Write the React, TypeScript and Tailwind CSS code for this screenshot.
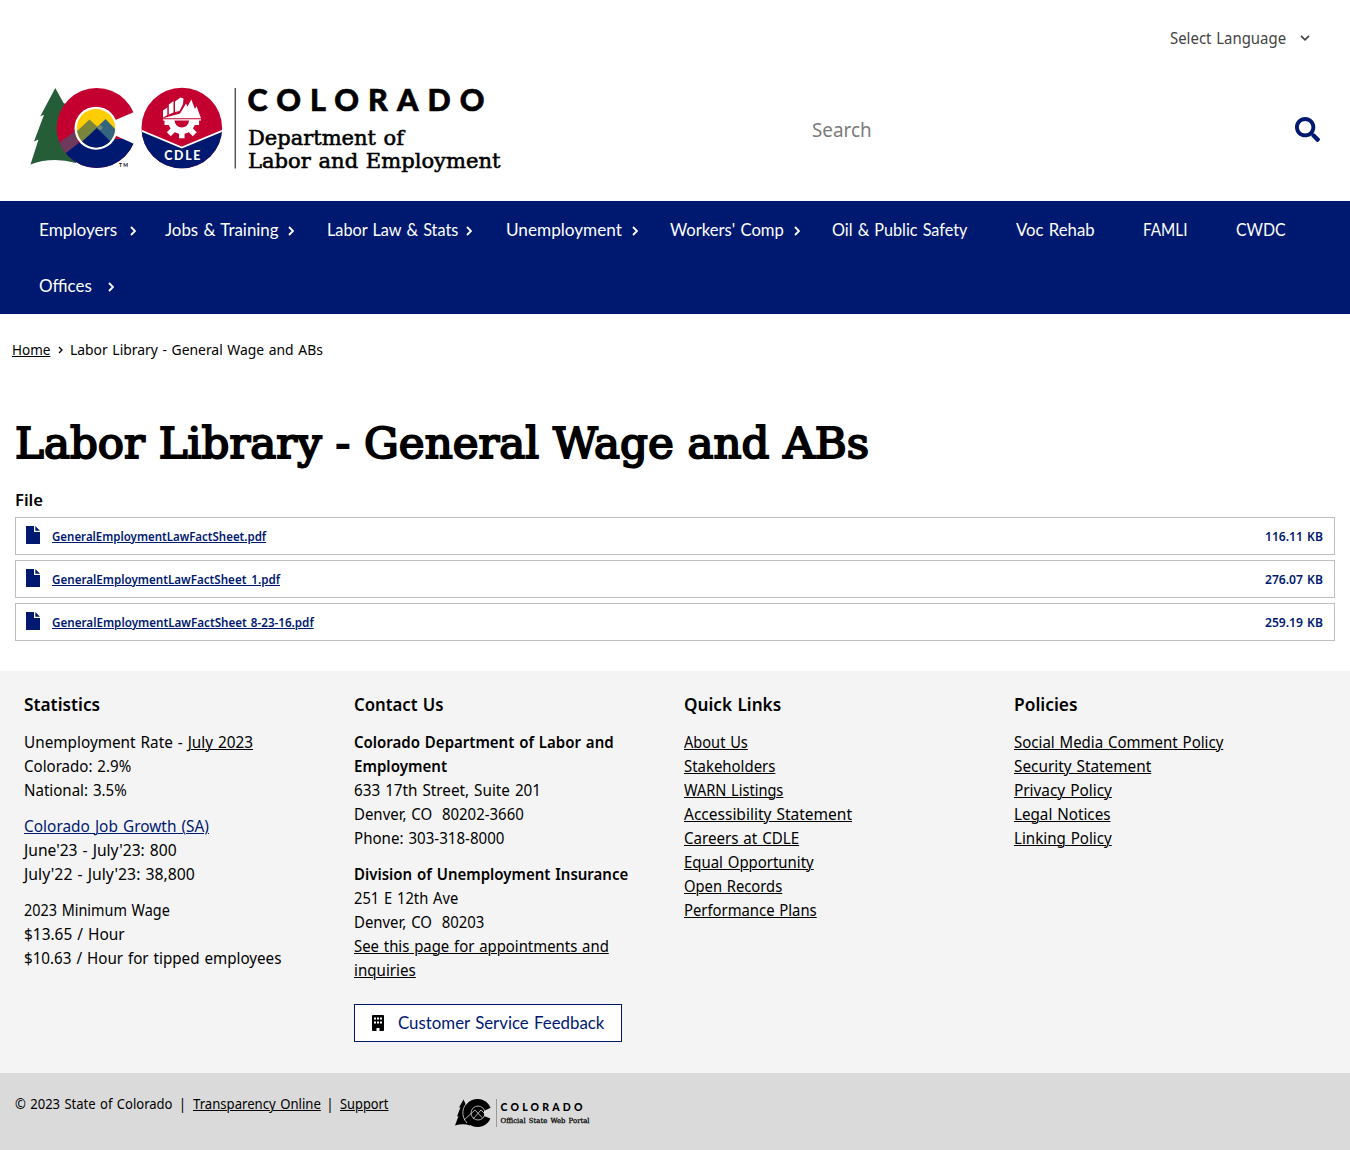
import { useLayoutEffect, useRef, useState } from 'react';
import type { ReactNode } from 'react';

/** Inline text that is condensed or widened to occupy exactly `w` pixels. */
function Fit({ w, children, className = '' }: { w: number; children: ReactNode; className?: string }) {
  const ref = useRef<HTMLSpanElement>(null);
  const [scale, setScale] = useState(1);
  useLayoutEffect(() => {
    if (ref.current) setScale(w / ref.current.offsetWidth);
  }, [w]);
  return (
    <span className="inline-block whitespace-nowrap" style={{ width: w }}>
      <span ref={ref} className={`inline-block origin-left ${className}`} style={{ transform: `scaleX(${scale})` }}>
        {children}
      </span>
    </span>
  );
}

const link = 'underline decoration-1 underline-offset-1';

function Chevron({ className = '' }: { className?: string }) {
  return (
    <svg className={`mt-px shrink-0 ${className}`} width="6" height="10" viewBox="0 0 6 10" fill="none" stroke="currentColor" strokeWidth="1.8">
      <path d="M1 1l4 4-4 4" />
    </svg>
  );
}

function Logo() {
  return (
    <svg width="476" height="94" viewBox="28 84 476 94" role="img" aria-label="Colorado Department of Labor and Employment">
      <defs>
        <clipPath id="c-outer"><circle cx="96.7" cy="128" r="40" /></clipPath>
        <clipPath id="c-inner"><circle cx="96" cy="128.2" r="19.2" /></clipPath>
        <clipPath id="badge"><circle cx="181.8" cy="128" r="40.3" /></clipPath>
        <clipPath id="below-brim"><rect x="160" y="120" width="44" height="22" /></clipPath>
      </defs>
      <path fill="#245d38" d="M55.300 88L40.300 116.300 44 114.800 34 141.500 38.500 139.500 30.500 164.500Q52 156.500 76 163L80 110 63.500 103z" />
      <g clipPath="url(#c-outer)">
        <rect x="56" y="87" width="82" height="82" fill="#c3002f" />
        <path fill="#6d3a5d" d="M56 145L78 129V146L64 156H56z" />
        <path fill="#001970" d="M62 156L84 139H140V170H70z" />
      </g>
      <path fill="#fff" d="M112 121.500L141 109V147L112 134z" />
      <circle cx="96" cy="128.200" r="21.500" fill="#fff" />
      <g clipPath="url(#c-inner)">
        <rect x="75" y="107" width="42" height="42" fill="#ffcd00" />
        <path fill="#7a853b" d="M75 133L89.500 119.500 104 133V149H75z" />
        <path fill="#35647e" d="M92 132L105.500 119 119 133V149H92z" />
        <path fill="#6c8975" d="M97.500 127L100 124.500 103 128 97.500 132z" />
        <path fill="#001970" d="M75 148L97 128 117 148V150H75z" />
      </g>
      <text x="119" y="167" fontSize="5" fontWeight="700" fontFamily="Lato, sans-serif" textLength="9">TM</text>
      <g clipPath="url(#badge)">
        <rect x="141" y="87" width="82" height="82" fill="#c3002f" />
        <path fill="#001970" d="M140 129.500L181.800 147 224 129.500V170H140z" />
        <path fill="none" stroke="#fff" strokeWidth="1.800" d="M140 130L181.800 147.600 224 130" />
      </g>
      <g fill="#fff">
        <path d="M163 117.500V110.500L167.300 107.500V115L163.500 117.500z" />
        <path d="M168.800 114.500V104.500L173.500 101V112.500z" />
        <path d="M175 112V101.500L180.500 97.500 183.500 98.500 183 104 179.500 111z" />
        <path d="M163 118.300L180 113.500 186 103.500 187.500 106.500 191.300 99.500 195 109 196.500 106 201 118.300z" />
        <path d="M163 119.300H201V120.500H163z" />
      </g>
      <g clipPath="url(#below-brim)" stroke="#fff">
        <circle cx="181.800" cy="120.300" r="10.500" fill="none" strokeWidth="6.500" />
        <path fill="none" strokeWidth="5.500" d="M181.800 132V138.300M174 129L168.800 134.300M189.600 129L194.800 134.300M170 122.300H164.500M193.600 122.300H199.100" />
      </g>
      <text x="164.300" y="160" fill="#fff" fontSize="12.300" fontWeight="900" fontFamily="Lato, sans-serif" textLength="36">CDLE</text>
      <path stroke="#54565a" strokeWidth="1.500" d="M235.300 88V168.500" />
      <text x="247.500" y="110.700" fontSize="30.500" fontWeight="900" fontFamily="Lato, sans-serif" stroke="#000" strokeWidth="0.600" textLength="237">COLORADO</text>
      <g fontFamily="'DejaVu Serif', serif" fontSize="20.500" stroke="#000" strokeWidth="0.550">
        <text x="248" y="145" textLength="156" lengthAdjust="spacingAndGlyphs">Department of</text>
        <text x="248" y="167.700" textLength="252.500" lengthAdjust="spacingAndGlyphs">Labor and Employment</text>
      </g>
    </svg>
  );
}

function PortalLogo() {
  return (
    <svg width="140" height="30" viewBox="455 1098 140 30" role="img" aria-label="Colorado Official State Web Portal">
      <path d="M463.500 1099.500L459 1107.500 460.500 1107.300 457 1116.500 458.500 1116 455 1125.500Q463 1123 470 1125.500L471 1104 466 1105z" />
      <circle cx="477.500" cy="1113" r="14" />
      <path fill="#dadada" d="M484 1111L493 1106.500V1119.500L484 1116z" />
      <g fill="none" stroke="#dadada" strokeWidth="0.800">
        <path d="M469 1101A14.500 14.500 0 0 0 467 1123" />
        <circle cx="478" cy="1113" r="7" />
        <path d="M464 1120L475 1110 482 1117.500M473 1119L481 1110 485 1114" />
      </g>
      <path stroke="#888" strokeWidth="0.800" d="M496.500 1099V1127" />
      <text x="500.500" y="1110.700" fontSize="10.500" fontWeight="900" fontFamily="Lato, sans-serif" textLength="82">COLORADO</text>
      <text x="500.500" y="1122.700" fontSize="6.900" fontFamily="'DejaVu Serif', serif" stroke="#000" strokeWidth="0.250" textLength="89" lengthAdjust="spacingAndGlyphs">Official State Web Portal</text>
    </svg>
  );
}

function Nav() {
  return (
    <nav className="h-[113px] bg-[#001970] pt-px pl-[39px] font-[Lato,sans-serif] text-[16.5px] text-white">
      <div className="flex h-14 items-center">
        <a className="flex w-[126px] items-center gap-[13px]"><Fit w={78}>Employers</Fit><Chevron /></a>
        <a className="flex w-[162px] items-center gap-[9.500px]"><Fit w={113.5}>Jobs &amp; Training</Fit><Chevron /></a>
        <a className="flex w-[179px] items-center gap-2"><Fit w={131}>Labor Law &amp; Stats</Fit><Chevron /></a>
        <a className="flex w-[164px] items-center gap-2.5"><Fit w={115.5}>Unemployment</Fit><Chevron /></a>
        <a className="flex w-[162px] items-center gap-2.5"><Fit w={114}>Workers&apos; Comp</Fit><Chevron /></a>
        <a className="w-[184px]"><Fit w={135.5}>Oil &amp; Public Safety</Fit></a>
        <a className="w-[127px]"><Fit w={79}>Voc Rehab</Fit></a>
        <a className="w-[93px]"><Fit w={44.5}>FAMLI</Fit></a>
        <a><Fit w={50}>CWDC</Fit></a>
      </div>
      <div className="flex h-14 items-center">
        <a className="flex items-center gap-4"><Fit w={52.5}>Offices</Fit><Chevron /></a>
      </div>
    </nav>
  );
}

const files = [
  { name: 'GeneralEmploymentLawFactSheet.pdf', w: 214.5, size: '116.11 KB' },
  { name: 'GeneralEmploymentLawFactSheet_1.pdf', w: 228.5, size: '276.07 KB' },
  { name: 'GeneralEmploymentLawFactSheet 8-23-16.pdf', w: 262, size: '259.19 KB' },
];

const quickLinks: [string, number][] = [
  ['About Us', 64], ['Stakeholders', 91.5], ['WARN Listings', 99.5], ['Accessibility Statement', 168],
  ['Careers at CDLE', 115], ['Equal Opportunity', 130], ['Open Records', 98], ['Performance Plans', 133],
];

const policies: [string, number][] = [
  ['Social Media Comment Policy', 209], ['Security Statement', 137.5], ['Privacy Policy', 98], ['Legal Notices', 96], ['Linking Policy', 97.5],
];

function Column({ title, w, children }: { title: string; w: number; children: ReactNode }) {
  return (
    <section className="w-[330px]">
      <h2 className="mb-3.5 h-6 text-[17.500px] font-semibold"><Fit w={w}>{title}</Fit></h2>
      {children}
    </section>
  );
}

function Line({ w, children, className }: { w: number; children: ReactNode; className?: string }) {
  return <div className="h-6"><Fit w={w} className={className}>{children}</Fit></div>;
}

export default function App() {
  return (
    <div className="h-[1150px] w-[1350px] overflow-hidden bg-white font-['Noto_Sans',sans-serif] text-[15.500px] leading-6 text-black [word-spacing:1px]">
      <header className="h-[201px] pt-[26px]">
        <div className="flex h-6 items-center justify-end gap-3.5 pr-10 text-[#444]">
          <Fit w={116.5}>Select Language</Fit>
          <svg width="10" height="6" viewBox="0 0 10 6" fill="none" stroke="#444" strokeWidth="1.700"><path d="M1 .8l4 4 4-4" /></svg>
        </div>
        <div className="flex pt-[34px] pl-7">
          <Logo />
          <div className="-mt-[3px] ml-[308px] flex w-[508px] items-center justify-between">
            <span className="text-[19px] text-[#7b7b7b]"><Fit w={59.5}>Search</Fit></span>
            <svg width="25" height="25" viewBox="0 0 512 512" fill="#001970">
              <path d="M505 442.700L405.300 343c-4.500-4.500-10.600-7-17-7H372c27.600-35.300 44-79.700 44-128C416 93.100 322.900 0 208 0S0 93.100 0 208s93.100 208 208 208c48.300 0 92.700-16.400 128-44v16.300c0 6.400 2.500 12.500 7 17l99.700 99.700c9.400 9.400 24.600 9.400 33.900 0l28.300-28.300c9.400-9.400 9.400-24.600.1-34zM208 336c-70.700 0-128-57.200-128-128 0-70.700 57.200-128 128-128 70.700 0 128 57.200 128 128 0 70.700-57.200 128-128 128z" />
            </svg>
          </div>
        </div>
      </header>
      <Nav />
      <main className="h-[357px] px-[15px] pt-6">
        <div className="-ml-[3px] flex h-6 items-center text-[14px]">
          <Fit w={38.5} className={link}>Home</Fit>
          <svg className="mr-[7px] ml-[7px]" width="5" height="8" viewBox="0 0 5 8" fill="none" stroke="#000" strokeWidth="1.300"><path d="M1 1l3 3-3 3" /></svg>
          <Fit w={253}>Labor Library - General Wage and ABs</Fit>
        </div>
        <h1 className="mt-[51px] h-[60px] font-['DejaVu_Serif',serif] text-[43px] leading-[60px] [-webkit-text-stroke:2px_black] [word-spacing:0px]">
          <Fit w={854}>Labor Library - General Wage and ABs</Fit>
        </h1>
        <div className="mt-[15px] h-[29px] text-[16px] font-semibold"><Fit w={28}>File</Fit></div>
        <ul className="flex flex-col gap-[5px] text-[12px] font-semibold text-[#001970]">
          {files.map((f) => (
            <li key={f.name} className="flex h-[38px] items-center border border-[#bfbfbf] pt-0.5 pr-3 pl-2.5">
              <svg className="mr-3 -mt-1" width="14" height="18" viewBox="0 0 14 18" fill="#001970"><path d="M0 0h8v6h6v12H0z" /><path d="M9.300 0L14 4.700H9.300z" /></svg>
              <Fit w={f.w} className={link}>{f.name}</Fit>
              <span className="ml-auto"><Fit w={57.5}>{f.size}</Fit></span>
            </li>
          ))}
        </ul>
      </main>
      <footer>
        <div className="flex h-[402px] bg-[#f4f4f4] pt-[21px] pl-6">
          <Column title="Statistics" w={76}>
            <Line w={229}>Unemployment Rate - <a className={link}>July 2023</a></Line>
            <Line w={107}>Colorado: 2.9%</Line>
            <Line w={103}>National: 3.5%</Line>
            <div className="h-3" />
            <Line w={185} className={`text-[#001970] ${link}`}>Colorado Job Growth (SA)</Line>
            <Line w={153}>June&apos;23 - July&apos;23: 800</Line>
            <Line w={171}>July&apos;22 - July&apos;23: 38,800</Line>
            <div className="h-3" />
            <Line w={146}>2023 Minimum Wage</Line>
            <Line w={100.5}>$13.65 / Hour</Line>
            <Line w={257.5}>$10.63 / Hour for tipped employees</Line>
          </Column>
          <Column title="Contact Us" w={90}>
            <Line w={259.5} className="font-semibold">Colorado Department of Labor and</Line>
            <Line w={93.5} className="font-semibold">Employment</Line>
            <Line w={187}>633 17th Street, Suite 201</Line>
            <Line w={170}>Denver, CO&nbsp; 80202-3660</Line>
            <Line w={150}>Phone: 303-318-8000</Line>
            <div className="h-3" />
            <Line w={274} className="font-semibold">Division of Unemployment Insurance</Line>
            <Line w={104.5}>251 E 12th Ave</Line>
            <Line w={130}>Denver, CO&nbsp; 80203</Line>
            <Line w={254.5} className={link}>See this page for appointments and</Line>
            <Line w={61.5} className={link}>inquiries</Line>
            <a className="mt-[22px] flex h-[38px] w-[268px] items-center border border-[#001970] bg-white pl-[17px] font-[Lato,sans-serif] text-[16.500px] text-[#001970]">
              <svg className="mr-3.5" width="12" height="16" viewBox="0 0 12 16" fill="#000" fillRule="evenodd">
                <path d="M1 0h10q1 0 1 1v14q0 1-1 1H7.500v-3h-3v3H1q-1 0-1-1V1q0-1 1-1zM2 2.500v2h2v-2zM5 2.500v2h2v-2zM8 2.500v2h2v-2zM2 6.500v2h2v-2zM5 6.500v2h2v-2zM8 6.500v2h2v-2z" />
              </svg>
              <Fit w={206}>Customer Service Feedback</Fit>
            </a>
          </Column>
          <Column title="Quick Links" w={97}>
            {quickLinks.map(([t, w]) => <Line key={t} w={w} className={link}>{t}</Line>)}
          </Column>
          <Column title="Policies" w={63.5}>
            {policies.map(([t, w]) => <Line key={t} w={w} className={link}>{t}</Line>)}
          </Column>
        </div>
        <div className="flex h-[77px] items-start bg-[#dadada] pt-[19px] pl-[15px] text-[13.500px]">
          <Fit w={157.5}>© 2023 State of Colorado</Fit>
          <span className="w-5 text-center">|</span>
          <Fit w={127.5} className={link}>Transparency Online</Fit>
          <span className="w-5 text-center">|</span>
          <Fit w={48.5} className={link}>Support</Fit>
          <div className="mt-1.5 ml-[66.500px]"><PortalLogo /></div>
        </div>
      </footer>
    </div>
  );
}
